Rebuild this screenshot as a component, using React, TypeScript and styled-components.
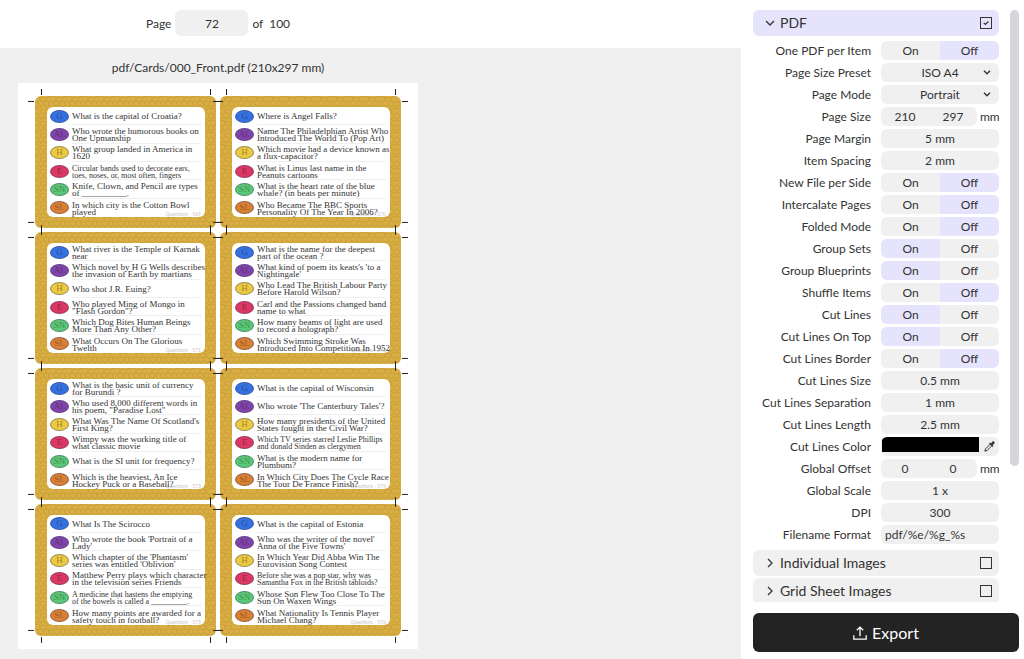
import React, { useId, useState } from "react";
import styled, { createGlobalStyle } from "styled-components";

const GlobalStyle = createGlobalStyle`
  *, *::before, *::after { box-sizing: border-box; }
  body {
    margin: 0;
    background: #fff;
    color: #333;
    font-family: Lato, "Liberation Sans", sans-serif;
    font-size: 12px;
    line-height: 16px;
    overflow: hidden;
  }
  button, input, select { font: inherit; color: inherit; }
`;

const Shell = styled.div`
  display: grid;
  grid-template-columns: minmax(0, 1fr) 283px;
  height: 100vh;
`;

/* ---------- preview ---------- */

const Preview = styled.main`
  display: flex;
  flex-direction: column;
  min-width: 0;
  overflow: hidden;
`;

const Toolbar = styled.header`
  flex: none;
  width: 436px;
  height: 48px;
  padding-top: 10px;
  display: flex;
  justify-content: center;
  align-items: flex-start;
  gap: 4px;
  line-height: 27px;
  white-space: pre;
`;

const PageInput = styled.input`
  width: 73px;
  height: 26px;
  padding: 0;
  border: 0;
  border-radius: 6px;
  background: #f0f0f0;
  text-align: center;
`;

const Canvas = styled.section`
  flex: 1;
  min-height: 0;
  padding: 12px 18px 0;
  background: #f0f0f0;
  overflow: hidden;
`;

const Sheet = styled.figure`
  width: 400px;
  max-width: 100%;
  margin: 0;
`;

const SheetName = styled.figcaption`
  padding-bottom: 7px;
  text-align: center;
`;

const Paper = styled.div`
  display: grid;
  grid-template-columns: 1fr 1fr;
  grid-template-rows: repeat(4, minmax(0, 1fr));
  gap: 4px;
  aspect-ratio: 210 / 297;
  padding: 13px 17px;
  background: #fff;
`;

const CardFrame = styled.article`
  position: relative;
  display: flex;
  min-width: 0;
  padding: 11px 11px 11px 12px;
`;

const Texture = styled.svg`
  position: absolute;
  inset: 0;
  width: 100%;
  height: 100%;
  border-radius: 6px;
`;

const CropMarks = styled.svg`
  position: absolute;
  z-index: 1;
  inset: -7px;
  width: calc(100% + 14px);
  height: calc(100% + 14px);
  stroke: #222;
  pointer-events: none;
`;

const CardFace = styled.div`
  position: relative;
  flex: 1;
  min-width: 0;
  border-radius: 6px;
  background: #fff;
`;

const QuestionList = styled.ul`
  position: relative;
  display: grid;
  grid-template-rows: repeat(6, minmax(0, 1fr));
  height: 100%;
  margin: 0;
  padding: 0 4px 0 3px;
  list-style: none;
`;

const Question = styled.li`
  display: grid;
  grid-template-columns: 19px minmax(0, 1fr);
  column-gap: 3px;
  align-items: center;
`;

const Badge = styled.span<{ $color: string }>`
  height: 13px;
  border: 1px solid rgba(60, 60, 90, 0.45);
  border-radius: 50%;
  background: ${(p) => p.$color};
  color: rgba(0, 0, 0, 0.35);
  font: 9px/11px "Liberation Serif", serif;
  text-align: center;
`;

const QuestionText = styled.span<{ $small: boolean }>`
  display: flex;
  align-items: center;
  height: 100%;
  padding-top: 2px;
  font-family: "Liberation Serif", serif;
  font-size: ${(p) => (p.$small ? 8 : 9)}px;
  line-height: 7px;
  white-space: pre;

  ${Question}:not(:last-child) > & {
    border-bottom: 1px solid #f0f0f0;
  }
`;

const CardNumber = styled.small`
  position: absolute;
  right: 4px;
  bottom: 0;
  color: #c8c8c8;
  font-size: 5px;
  line-height: 6px;
`;

/* ---------- settings ---------- */

const Sidebar = styled.aside`
  display: flex;
  flex-direction: column;
  gap: 11px;
  min-height: 0;
  padding: 10px 5px 7px 12px;
  background: #fff;
`;

const ScrollArea = styled.div`
  flex: 1;
  min-height: 0;
  display: grid;
  grid-template-columns: minmax(0, 1fr) 9px;
  column-gap: 11px;
`;

const Sections = styled.div`
  min-height: 0;
  overflow: hidden;
  display: flex;
  flex-direction: column;
`;

const ScrollThumb = styled.div`
  height: 77%;
  border-radius: 5px;
  background: #d6d5dc;
`;

const SectionBar = styled.div<{ $open?: boolean }>`
  flex: none;
  display: flex;
  align-items: center;
  justify-content: space-between;
  height: 26px;
  margin-bottom: ${(p) => (p.$open ? 5 : 2)}px;
  padding: 0 7px 0 12px;
  border-radius: 6px;
  background: ${(p) => (p.$open ? "#e6e3fd" : "#f0f0f0")};
`;

const SectionToggle = styled.button`
  display: flex;
  align-items: center;
  gap: 5px;
  padding: 0;
  border: 0;
  background: none;
  font-size: 14px;
  line-height: 26px;
`;

const TickWrap = styled.span`
  position: relative;
  display: flex;
`;

const TickBox = styled.input`
  appearance: none;
  width: 12px;
  height: 12px;
  margin: 0;
  border: 1px solid #333;
`;

const TickMark = styled.svg`
  position: absolute;
  inset: 0;
  pointer-events: none;
`;

const Fields = styled.div`
  flex: none;
  display: flex;
  flex-direction: column;
  gap: 3px;
  margin-bottom: 6px;
`;

const FieldRow = styled.div`
  display: grid;
  grid-template-columns: minmax(0, 1fr) 118px;
  column-gap: 10px;
  height: 19px;
  line-height: 19px;
`;

const FieldLabel = styled.label`
  text-align: right;
  white-space: nowrap;
`;

const Box = styled.div`
  display: flex;
  min-width: 0;
  border-radius: 6px;
  background: #f0f0f0;
  overflow: hidden;
`;

const Segment = styled.button<{ $on: boolean }>`
  flex: 1;
  padding: 0;
  border: 0;
  background: ${(p) => (p.$on ? "#e6e3fd" : "#f0f0f0")};
`;

const TextField = styled.input<{ $align?: string }>`
  flex: 1;
  width: 0;
  min-width: 0;
  padding: 0 4px;
  border: 0;
  background: none;
  text-align: ${(p) => p.$align || "center"};
`;

const PairRow = styled.div`
  display: grid;
  grid-template-columns: 96px 1fr;
  column-gap: 3px;
`;

const SelectWrap = styled.div`
  position: relative;
  display: flex;
`;

const Select = styled.select`
  appearance: none;
  flex: 1;
  padding: 0;
  border: 0;
  border-radius: 6px;
  background: #f0f0f0;
  text-align: center;
  text-align-last: center;
`;

const SelectArrow = styled.svg`
  position: absolute;
  right: 8px;
  top: 7px;
  pointer-events: none;
`;

const Swatch = styled.input`
  appearance: none;
  flex: 1;
  min-width: 0;
  height: 15px;
  margin: 0 0 0 1px;
  padding: 0;
  border: 0;
  background: none;

  &::-webkit-color-swatch-wrapper { padding: 0; }
  &::-webkit-color-swatch { border: 0; border-radius: 4px 0 0 0; }
`;

const PickButton = styled.button`
  display: flex;
  align-items: center;
  justify-content: center;
  width: 20px;
  padding: 0;
  border: 0;
  background: none;
`;

const ExportButton = styled.button`
  flex: none;
  display: flex;
  align-items: center;
  justify-content: center;
  gap: 5px;
  height: 39px;
  border: 0;
  border-radius: 6px;
  background: #232323;
  color: #fff;
  font-size: 16px;
  line-height: 20px;
`;

/* ---------- data ---------- */

const categories = [
  { code: "G", color: "#3671e0" },
  { code: "AL", color: "#8144a8" },
  { code: "H", color: "#eac843" },
  { code: "E", color: "#db3764" },
  { code: "SN", color: "#5bc777" },
  { code: "SL", color: "#d98035" },
];

const cards = [
  { no: 569, questions: [
    "What is the capital of Croatia?",
    "Who wrote the humorous books on\nOne Upmanship",
    "What group landed in America in\n1620",
    "Circular bands used to decorate ears,\ntoes, noses, or, most often, fingers",
    "Knife, Clown, and Pencil are types\nof __________.",
    "In which city is the Cotton Bowl\nplayed",
  ] },
  { no: 570, questions: [
    "Where is Angel Falls?",
    "Name The Philadelphian Artist Who\nIntroduced The World To (Pop Art)",
    "Which movie had a device known as\na flux-capacitor?",
    "What is Linus last name in the\nPeanuts cartoons",
    "What is the heart rate of the blue\nwhale? (in beats per minute)",
    "Who Became The BBC Sports\nPersonality Of The Year In 2006?",
  ] },
  { no: 571, questions: [
    "What river is the Temple of Karnak\nnear",
    "Which novel by H G Wells describes\nthe invasion of Earth by martians",
    "Who shot J.R. Euing?",
    "Who played Ming of Mongo in\n\"Flash Gordon\"?",
    "Which Dog Bites Human Beings\nMore Than Any Other?",
    "What Occurs On The Glorious\nTwelth",
  ] },
  { no: 572, questions: [
    "What is the name for the deepest\npart of the ocean ?",
    "What kind of poem its keats's 'to a\nNightingale'",
    "Who Lead The British Labour Party\nBefore Harold Wilson?",
    "Carl and the Passions changed band\nname to what",
    "How many beams of light are used\nto record a holograph?",
    "Which Swimming Stroke Was\nIntroduced Into Competition In 1952",
  ] },
  { no: 573, questions: [
    "What is the basic unit of currency\nfor Burundi ?",
    "Who used 8,000 different words in\nhis poem, \"Paradise Lost\"",
    "What Was The Name Of Scotland's\nFirst King?",
    "Wimpy was the working title of\nwhat classic movie",
    "What is the SI unit for frequency?",
    "Which is the heaviest, An Ice\nHockey Puck or a Baseball?",
  ] },
  { no: 574, questions: [
    "What is the capital of Wisconsin",
    "Who wrote 'The Canterbury Tales'?",
    "How many presidents of the United\nStates fought in the Civil War?",
    "Which TV series starred Leslie Phillips\nand donald Sinden as clergymen",
    "What is the modern name for\nPlumbum?",
    "In Which City Does The Cycle Race\nThe Tour De France Finish?",
  ] },
  { no: 575, questions: [
    "What Is The Scirocco",
    "Who wrote the book 'Portrait of a\nLady'",
    "Which chapter of the 'Phantasm'\nseries was entitled 'Oblivion'",
    "Matthew Perry plays which character\nin the television series Friends",
    "A medicine that hastens the emptying\nof the bowels is called a _________.",
    "How many points are awarded for a\nsafety touch in football?",
  ] },
  { no: 576, questions: [
    "What is the capital of Estonia",
    "Who was the writer of the novel'\nAnna of the Five Towns'",
    "In Which Year Did Abba Win The\nEurovision Song Contest",
    "Before she was a pop star, why was\nSamantha Fox in the British tabloids?",
    "Whose Son Flew Too Close To The\nSun On Waxen Wings",
    "What Nationality Is Tennis Player\nMichael Chang?",
  ] },
];

/* Questions with a longer line than this are set one size smaller. */
const LONG_LINE = 35;
const isLong = (text: string) => text.split("\n").some((line) => line.length > LONG_LINE);

/* ---------- parts ---------- */

function Card({ no, questions }: { no: number; questions: string[] }) {
  const pattern = `pebbles-${no}`;
  return (
    <CardFrame>
      <Texture aria-hidden="true">
        <defs>
          <pattern id={pattern} width="16" height="12" patternUnits="userSpaceOnUse">
            <rect width="16" height="12" fill="#d8ae45" />
            <path
              d="M0 1l3-1 2 2v2l-2 2-3-1M5 2l3-1 3 1v3l-3 1-3-2M11 2l3-2 2 1M11 5l3 1 2-1M3 6v3l-2 2-1-1M3 9l3 1 3-1V6M9 9l2 2 3-1V6M6 10v2M14 10l2 1M1 11v1M11 11v1"
              fill="none"
              stroke="#c0942a"
              strokeWidth="0.7"
              strokeOpacity="0.75"
            />
          </pattern>
        </defs>
        <rect width="100%" height="100%" fill={`url(#${pattern})`} />
      </Texture>
      <CardFace>
        <CardNumber>Questions - {no}</CardNumber>
        <QuestionList>
          {questions.map((text, i) => (
            <Question key={text}>
              <Badge $color={categories[i].color}>{categories[i].code}</Badge>
              <QuestionText $small={isLong(text)}>{text}</QuestionText>
            </Question>
          ))}
        </QuestionList>
      </CardFace>
      <CropMarks viewBox="0 0 195 146" preserveAspectRatio="none" aria-hidden="true">
        <path d="M13.5 0v6M182.5 0v6M13.5 140v6M182.5 140v6M0 12.5h6M0 133.5h6M189 12.5h6M189 133.5h6" />
      </CropMarks>
    </CardFrame>
  );
}

function Toggle({ label, value }: { label: string; value: boolean }) {
  const id = useId();
  const [on, setOn] = useState(value);
  return (
    <FieldRow>
      <FieldLabel as="span" id={id}>{label}</FieldLabel>
      <Box role="group" aria-labelledby={id}>
        <Segment type="button" $on={on} aria-pressed={on} onClick={() => setOn(true)}>On</Segment>
        <Segment type="button" $on={!on} aria-pressed={!on} onClick={() => setOn(false)}>Off</Segment>
      </Box>
    </FieldRow>
  );
}

function Field({ label, value, align }: { label: string; value: string; align?: string }) {
  const id = useId();
  return (
    <FieldRow>
      <FieldLabel htmlFor={id}>{label}</FieldLabel>
      <Box><TextField id={id} defaultValue={value} $align={align} /></Box>
    </FieldRow>
  );
}

function Pair({ label, values, second }: { label: string; values: string[]; second: string }) {
  const id = useId();
  return (
    <FieldRow>
      <FieldLabel htmlFor={id}>{label}</FieldLabel>
      <PairRow>
        <Box>
          <TextField id={id} defaultValue={values[0]} />
          <TextField aria-label={second} defaultValue={values[1]} />
        </Box>
        <span>mm</span>
      </PairRow>
    </FieldRow>
  );
}

function Choice({ label, options }: { label: string; options: string[] }) {
  const id = useId();
  return (
    <FieldRow>
      <FieldLabel htmlFor={id}>{label}</FieldLabel>
      <SelectWrap>
        <Select id={id}>{options.map((o) => <option key={o}>{o}</option>)}</Select>
        <SelectArrow width="8" height="5" viewBox="0 0 8 5" aria-hidden="true">
          <path d="M1 .8l3 3 3-3" fill="none" stroke="#333" strokeWidth="1.4" />
        </SelectArrow>
      </SelectWrap>
    </FieldRow>
  );
}

function ColorField({ label }: { label: string }) {
  const id = useId();
  return (
    <FieldRow>
      <FieldLabel htmlFor={id}>{label}</FieldLabel>
      <Box>
        <Swatch id={id} type="color" defaultValue="#000000" />
        <PickButton type="button" aria-label="Pick a color">
          <svg width="11" height="11" viewBox="0 0 11 11" aria-hidden="true">
            <path d="M6.2 3.2L1.6 7.8.8 10.2l2.4-.8 4.600-4.600" fill="none" stroke="#333" strokeWidth="1" strokeLinejoin="round" />
            <path d="M5 2.600l1-1 1 .8L8.300.8c.6-.6 1.400-.6 1.900 0 .5.5.5 1.300 0 1.900L8.600 4l.8 1-1 1z" fill="#333" />
          </svg>
        </PickButton>
      </Box>
    </FieldRow>
  );
}

function SectionHeader({ title, open }: { title: string; open?: boolean }) {
  const [ticked, setTicked] = useState(!!open);
  return (
    <SectionBar $open={open}>
      <SectionToggle type="button" aria-expanded={!!open}>
        <svg width="10" height="10" viewBox="0 0 10 10" fill="none" stroke="#333" strokeWidth="1.3" aria-hidden="true">
          <path d={open ? "M1 3l4 4 4-4" : "M3 1l4 4-4 4"} />
        </svg>
        {title}
      </SectionToggle>
      <TickWrap>
        <TickBox type="checkbox" aria-label={title} checked={ticked} onChange={() => setTicked(!ticked)} />
        {ticked && (
          <TickMark width="12" height="12" viewBox="0 0 12 12" aria-hidden="true">
            <path d="M3.7 5.9l1.700 1.600L8.400 4.500" fill="none" stroke="#333" strokeWidth="1.2" />
          </TickMark>
        )}
      </TickWrap>
    </SectionBar>
  );
}

export default function App() {
  return (
    <>
      <GlobalStyle />
      <Shell>
        <Preview>
          <Toolbar>
            <label htmlFor="page">Page</label>
            <PageInput id="page" defaultValue="72" />
            <span>of  100</span>
          </Toolbar>
          <Canvas>
            <Sheet>
              <SheetName>pdf/Cards/000_Front.pdf (210x297 mm)</SheetName>
              <Paper>
                {cards.map((card) => <Card key={card.no} {...card} />)}
              </Paper>
            </Sheet>
          </Canvas>
        </Preview>
        <Sidebar>
          <ScrollArea>
            <Sections>
              <SectionHeader title="PDF" open />
              <Fields>
                <Toggle label="One PDF per Item" value={false} />
                <Choice label="Page Size Preset" options={["ISO A4"]} />
                <Choice label="Page Mode" options={["Portrait", "Landscape"]} />
                <Pair label="Page Size" values={["210", "297"]} second="Page height" />
                <Field label="Page Margin" value="5 mm" />
                <Field label="Item Spacing" value="2 mm" />
                <Toggle label="New File per Side" value={false} />
                <Toggle label="Intercalate Pages" value={false} />
                <Toggle label="Folded Mode" value={false} />
                <Toggle label="Group Sets" value />
                <Toggle label="Group Blueprints" value />
                <Toggle label="Shuffle Items" value={false} />
                <Toggle label="Cut Lines" value />
                <Toggle label="Cut Lines On Top" value />
                <Toggle label="Cut Lines Border" value={false} />
                <Field label="Cut Lines Size" value="0.5 mm" />
                <Field label="Cut Lines Separation" value="1 mm" />
                <Field label="Cut Lines Length" value="2.5 mm" />
                <ColorField label="Cut Lines Color" />
                <Pair label="Global Offset" values={["0", "0"]} second="Vertical offset" />
                <Field label="Global Scale" value="1 x" />
                <Field label="DPI" value="300" />
                <Field label="Filename Format" value="pdf/%e/%g_%s" align="left" />
              </Fields>
              <SectionHeader title="Individual Images" />
              <SectionHeader title="Grid Sheet Images" />
            </Sections>
            <ScrollThumb />
          </ScrollArea>
          <ExportButton type="button">
            <svg width="14" height="14" viewBox="0 0 14 14" fill="none" stroke="#fff" strokeWidth="1.3" aria-hidden="true">
              <path d="M.8 9.200v4h12.400v-4M7 10.200V1.200M3.800 4.300L7 1.100l3.200 3.200" />
            </svg>
            Export
          </ExportButton>
        </Sidebar>
      </Shell>
    </>
  );
}
